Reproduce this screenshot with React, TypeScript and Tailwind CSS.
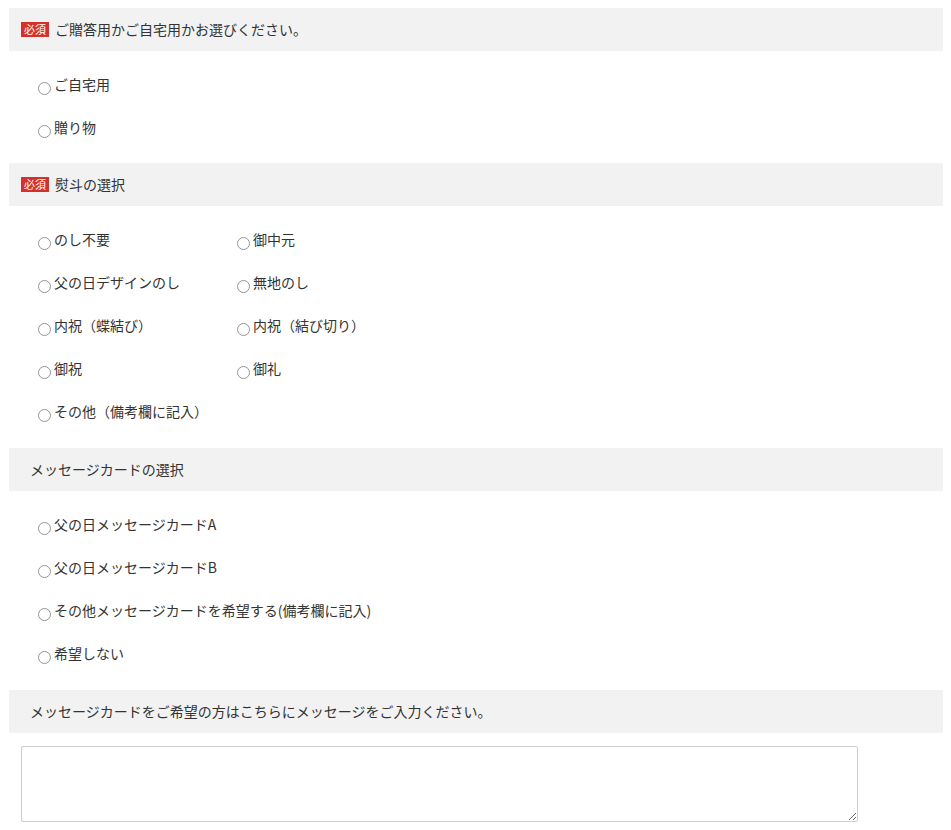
const font = {
  fontFamily: '"Noto Sans CJK JP", "Noto Sans", sans-serif',
};

type Opt = string;

const Heading = ({ text, required }: { text: string; required?: boolean }) => (
  <div
    className={`flex h-[43px] items-center bg-[#f2f2f2] text-[14px] text-[#333] ${
      required ? "pl-[12px]" : "pl-[21px]"
    }`}
  >
    {required && (
      <span className="mr-[6px] flex h-[15px] w-[28px] items-center justify-center bg-[#d6302c] text-[11px] leading-none text-white">
        必須
      </span>
    )}
    <span className="pb-[1px] leading-none">{text}</span>
  </div>
);

const Radio = ({ label }: { label: Opt }) => (
  <label className="flex h-[43px] items-center text-[14px] text-[#333]">
    <span className="mr-[3px] ml-[5px] mt-[7px] h-[13px] w-[13px] shrink-0 rounded-full border border-[#959595] bg-white" />
    <span className="pb-[2px] leading-none">{label}</span>
  </label>
);

const OptionList = ({
  items,
  cols = 1,
  tight,
}: {
  items: Opt[];
  cols?: 1 | 2;
  tight?: boolean;
}) => (
  <div
    className={`grid pt-[12px] pl-[24px] ${tight ? "pb-[14px]" : "pb-[15px]"} ${
      cols === 2 ? "grid-cols-[199px_199px]" : "grid-cols-1"
    }`}
  >
    {items.map((it) => (
      <Radio key={it} label={it} />
    ))}
  </div>
);

export default function App() {
  return (
    <div className="min-h-[830px] bg-white pt-[8px] pr-[8px] pl-[9px]" style={font}>
      <Heading required text="ご贈答用かご自宅用かお選びください。" />
      <OptionList tight items={["ご自宅用", "贈り物"]} />

      <Heading required text="熨斗の選択" />
      <OptionList
        cols={2}
        items={[
          "のし不要",
          "御中元",
          "父の日デザインのし",
          "無地のし",
          "内祝（蝶結び）",
          "内祝（結び切り）",
          "御祝",
          "御礼",
          "その他（備考欄に記入）",
        ]}
      />

      <Heading text="メッセージカードの選択" />
      <OptionList
        items={[
          "父の日メッセージカードA",
          "父の日メッセージカードB",
          "その他メッセージカードを希望する(備考欄に記入)",
          "希望しない",
        ]}
      />

      <Heading text="メッセージカードをご希望の方はこちらにメッセージをご入力ください。" />
      <div className="pt-[13px] pl-[12px]">
        <textarea className="block h-[76px] w-[837px] rounded-[2px] border border-[#cccccc] bg-white" />
      </div>
    </div>
  );
}
